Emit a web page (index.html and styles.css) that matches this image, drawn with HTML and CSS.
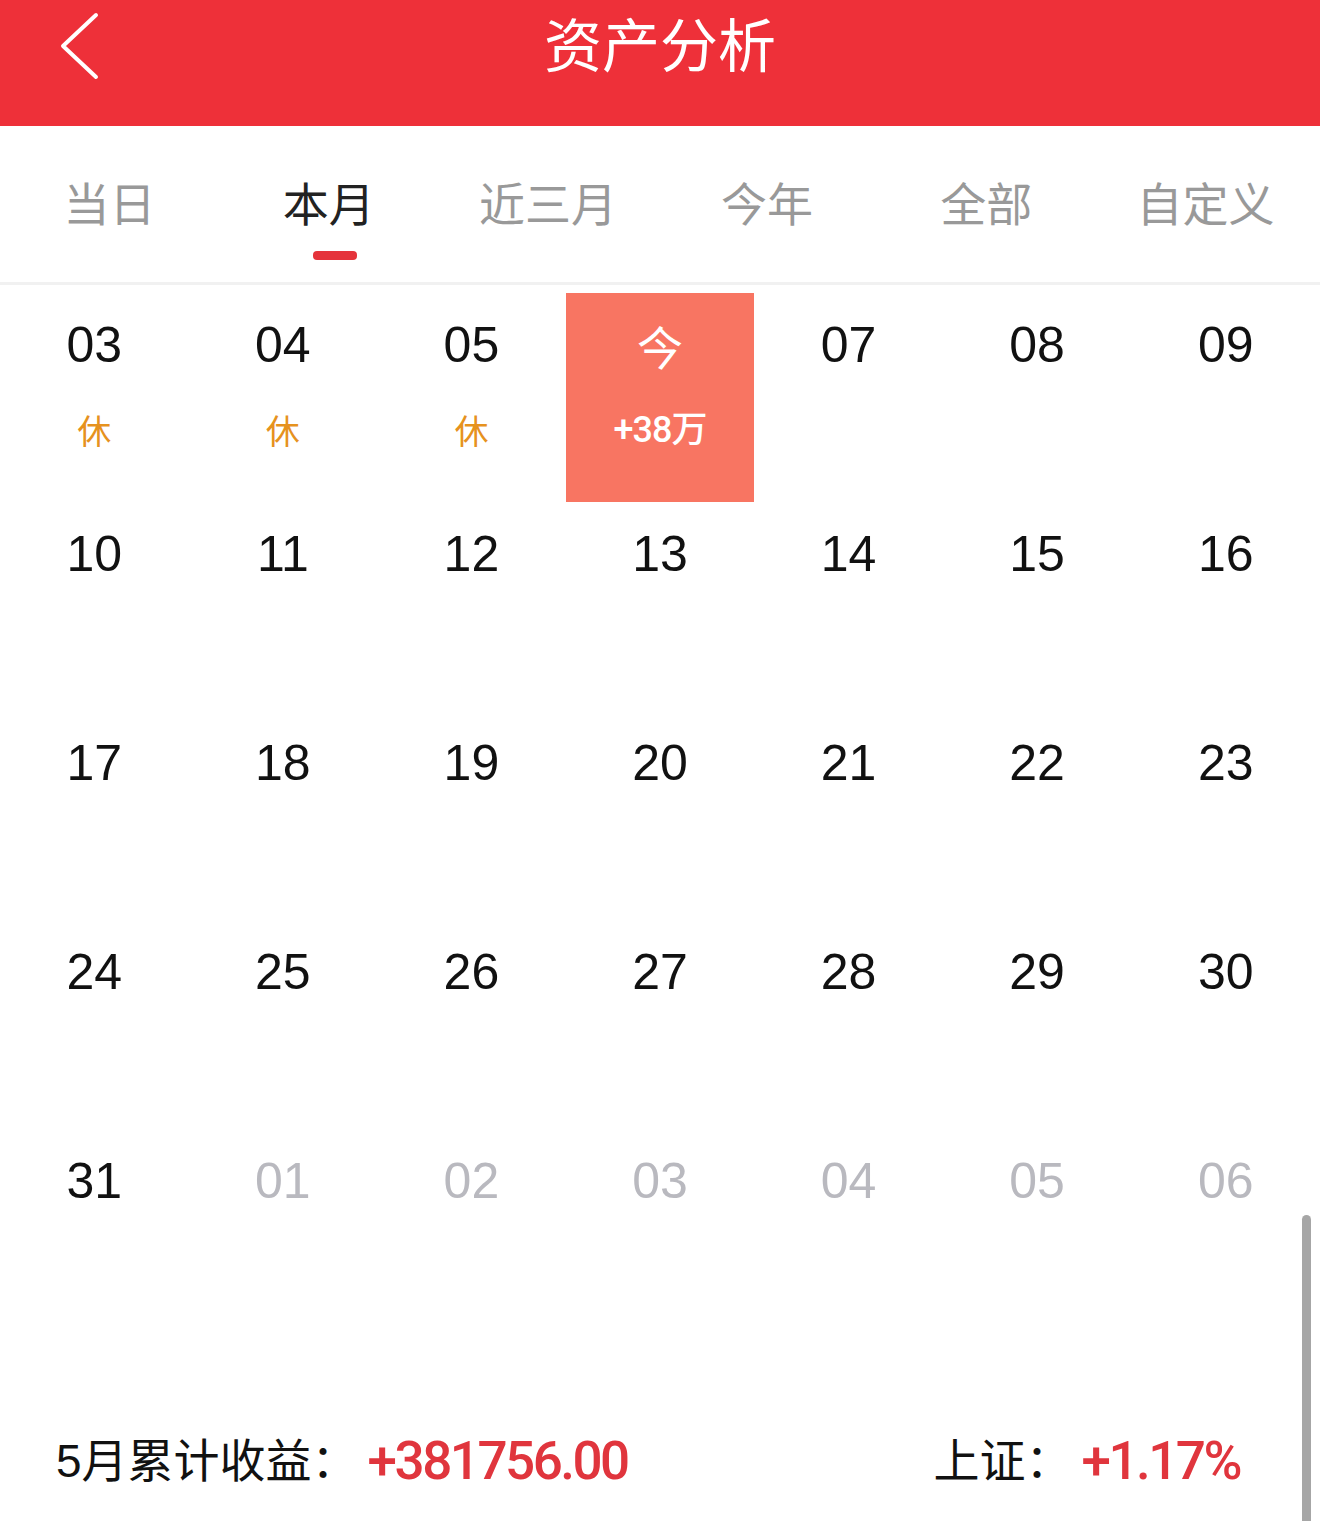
FILE: index.html
```html
<!DOCTYPE html>
<html lang="zh-CN">
<head>
<meta charset="utf-8">
<title>资产分析</title>
<link rel="stylesheet" href="styles.css">
</head>
<body>
<div class="app">
  <header class="topbar">
    <button class="back" aria-label="返回">
      <svg width="40" height="70" viewBox="0 0 40 70"><polyline points="36,4 3,35 36,66" fill="none" stroke="#fff" stroke-width="4" stroke-linecap="round" stroke-linejoin="round"/></svg>
    </button>
    <h1 class="title">资产分析</h1>
    <div class="spacer"></div>
  </header>

  <nav class="tabs">
    <div class="tab"><span class="tab-text">当日</span></div>
    <div class="tab active"><span class="tab-text">本月</span><span class="indicator"></span></div>
    <div class="tab"><span class="tab-text">近三月</span></div>
    <div class="tab"><span class="tab-text">今年</span></div>
    <div class="tab"><span class="tab-text">全部</span></div>
    <div class="tab"><span class="tab-text">自定义</span></div>
  </nav>

  <section class="calendar">
    <div class="day"><span class="num">03</span><span class="tag rest">休</span></div>
    <div class="day"><span class="num">04</span><span class="tag rest">休</span></div>
    <div class="day"><span class="num">05</span><span class="tag rest">休</span></div>
    <div class="day today"><span class="num cjk">今</span><span class="tag gain">+38万</span></div>
    <div class="day"><span class="num">07</span></div>
    <div class="day"><span class="num">08</span></div>
    <div class="day"><span class="num">09</span></div>

    <div class="day"><span class="num">10</span></div>
    <div class="day"><span class="num">11</span></div>
    <div class="day"><span class="num">12</span></div>
    <div class="day"><span class="num">13</span></div>
    <div class="day"><span class="num">14</span></div>
    <div class="day"><span class="num">15</span></div>
    <div class="day"><span class="num">16</span></div>

    <div class="day"><span class="num">17</span></div>
    <div class="day"><span class="num">18</span></div>
    <div class="day"><span class="num">19</span></div>
    <div class="day"><span class="num">20</span></div>
    <div class="day"><span class="num">21</span></div>
    <div class="day"><span class="num">22</span></div>
    <div class="day"><span class="num">23</span></div>

    <div class="day"><span class="num">24</span></div>
    <div class="day"><span class="num">25</span></div>
    <div class="day"><span class="num">26</span></div>
    <div class="day"><span class="num">27</span></div>
    <div class="day"><span class="num">28</span></div>
    <div class="day"><span class="num">29</span></div>
    <div class="day"><span class="num">30</span></div>

    <div class="day"><span class="num">31</span></div>
    <div class="day other"><span class="num">01</span></div>
    <div class="day other"><span class="num">02</span></div>
    <div class="day other"><span class="num">03</span></div>
    <div class="day other"><span class="num">04</span></div>
    <div class="day other"><span class="num">05</span></div>
    <div class="day other"><span class="num">06</span></div>
  </section>

  <footer class="summary">
    <div class="stat"><span class="label">5月累计收益：</span><span class="value">+381756.00</span></div>
    <div class="stat"><span class="label">上证：</span><span class="value">+1.17%</span></div>
  </footer>

  <div class="scrollbar"></div>
</div>
</body>
</html>
```

FILE: styles.css
```css
* { box-sizing: border-box; }
html, body { margin: 0; padding: 0; }
body {
  background: #fff;
  font-family: "Liberation Sans", "Noto Sans CJK SC", sans-serif;
  color: #111;
}
.app {
  position: relative;
  width: 1320px;
  height: 1521px;
  overflow: hidden;
  background: #fff;
}

/* header */
.topbar {
  height: 126px;
  background: #ee3039;
  display: grid;
  grid-template-columns: 1fr auto 1fr;
  align-items: start;
}
.back {
  justify-self: start;
  margin: 11px 0 0 60px;
  padding: 0;
  border: 0;
  background: none;
  display: flex;
}
.title {
  margin: 0;
  font-family: "Noto Sans CJK SC", sans-serif;
  font-weight: 400;
  font-size: 58px;
  line-height: 84px;
  color: #fff;
}

/* tabs */
.tabs {
  height: 159px;
  display: grid;
  grid-template-columns: repeat(6, 1fr);
  padding-right: 5px;
  border-bottom: 3px solid #f1f1f1;
}
.tab {
  display: flex;
  flex-direction: column;
  align-items: center;
  padding-top: 50px;
}
.tab-text {
  font-family: "Noto Sans CJK SC", sans-serif;
  font-size: 46px;
  line-height: 50px;
  color: #999;
}
.tab.active .tab-text { color: #222; }
.indicator {
  width: 44px;
  height: 9px;
  margin-top: 25px;
  margin-left: 12px;
  border-radius: 4px;
  background: #e5333b;
}

/* calendar */
.calendar {
  margin-top: 8px;
  display: grid;
  grid-template-columns: repeat(7, 1fr);
  grid-auto-rows: 209px;
}
.day {
  display: flex;
  flex-direction: column;
  align-items: center;
  padding-top: 24px;
}
.num {
  font-family: "Liberation Sans", sans-serif;
  font-size: 50px;
  line-height: 56px;
  color: #111;
}
.num.cjk {
  font-family: "Noto Sans CJK SC", sans-serif;
  font-size: 46px;
}
.day.other .num { color: #b9b9bf; }
.tag {
  margin-top: 37px;
  font-family: "Noto Sans CJK SC", sans-serif;
  font-size: 34px;
  line-height: 40px;
}
.tag.rest { color: #e6921e; }
.day.today {
  background: #f87562;
}
.day.today .num,
.day.today .tag { color: #fff; }
.tag.gain {
  font-family: Roboto, "Noto Sans CJK SC", sans-serif;
  font-weight: 500;
  font-size: 36px;
  letter-spacing: -1px;
}

/* summary */
.summary {
  margin-top: 93px;
  display: flex;
  justify-content: space-between;
  align-items: center;
  padding: 0 80px 0 56px;
}
.stat {
  display: flex;
  align-items: center;
}
.label {
  font-family: "Liberation Sans", "Noto Sans CJK SC", sans-serif;
  font-size: 46px;
  line-height: 60px;
  color: #111;
}
.value {
  margin-left: 10px;
  font-family: Roboto, "Liberation Sans", sans-serif;
  font-weight: 500;
  font-size: 53px;
  line-height: 60px;
  letter-spacing: -2.5px;
  color: #e0353d;
}

.scrollbar {
  position: absolute;
  left: 1302px;
  top: 1215px;
  width: 9px;
  height: 330px;
  border-radius: 5px;
  background: #a6a6a6;
}
```
